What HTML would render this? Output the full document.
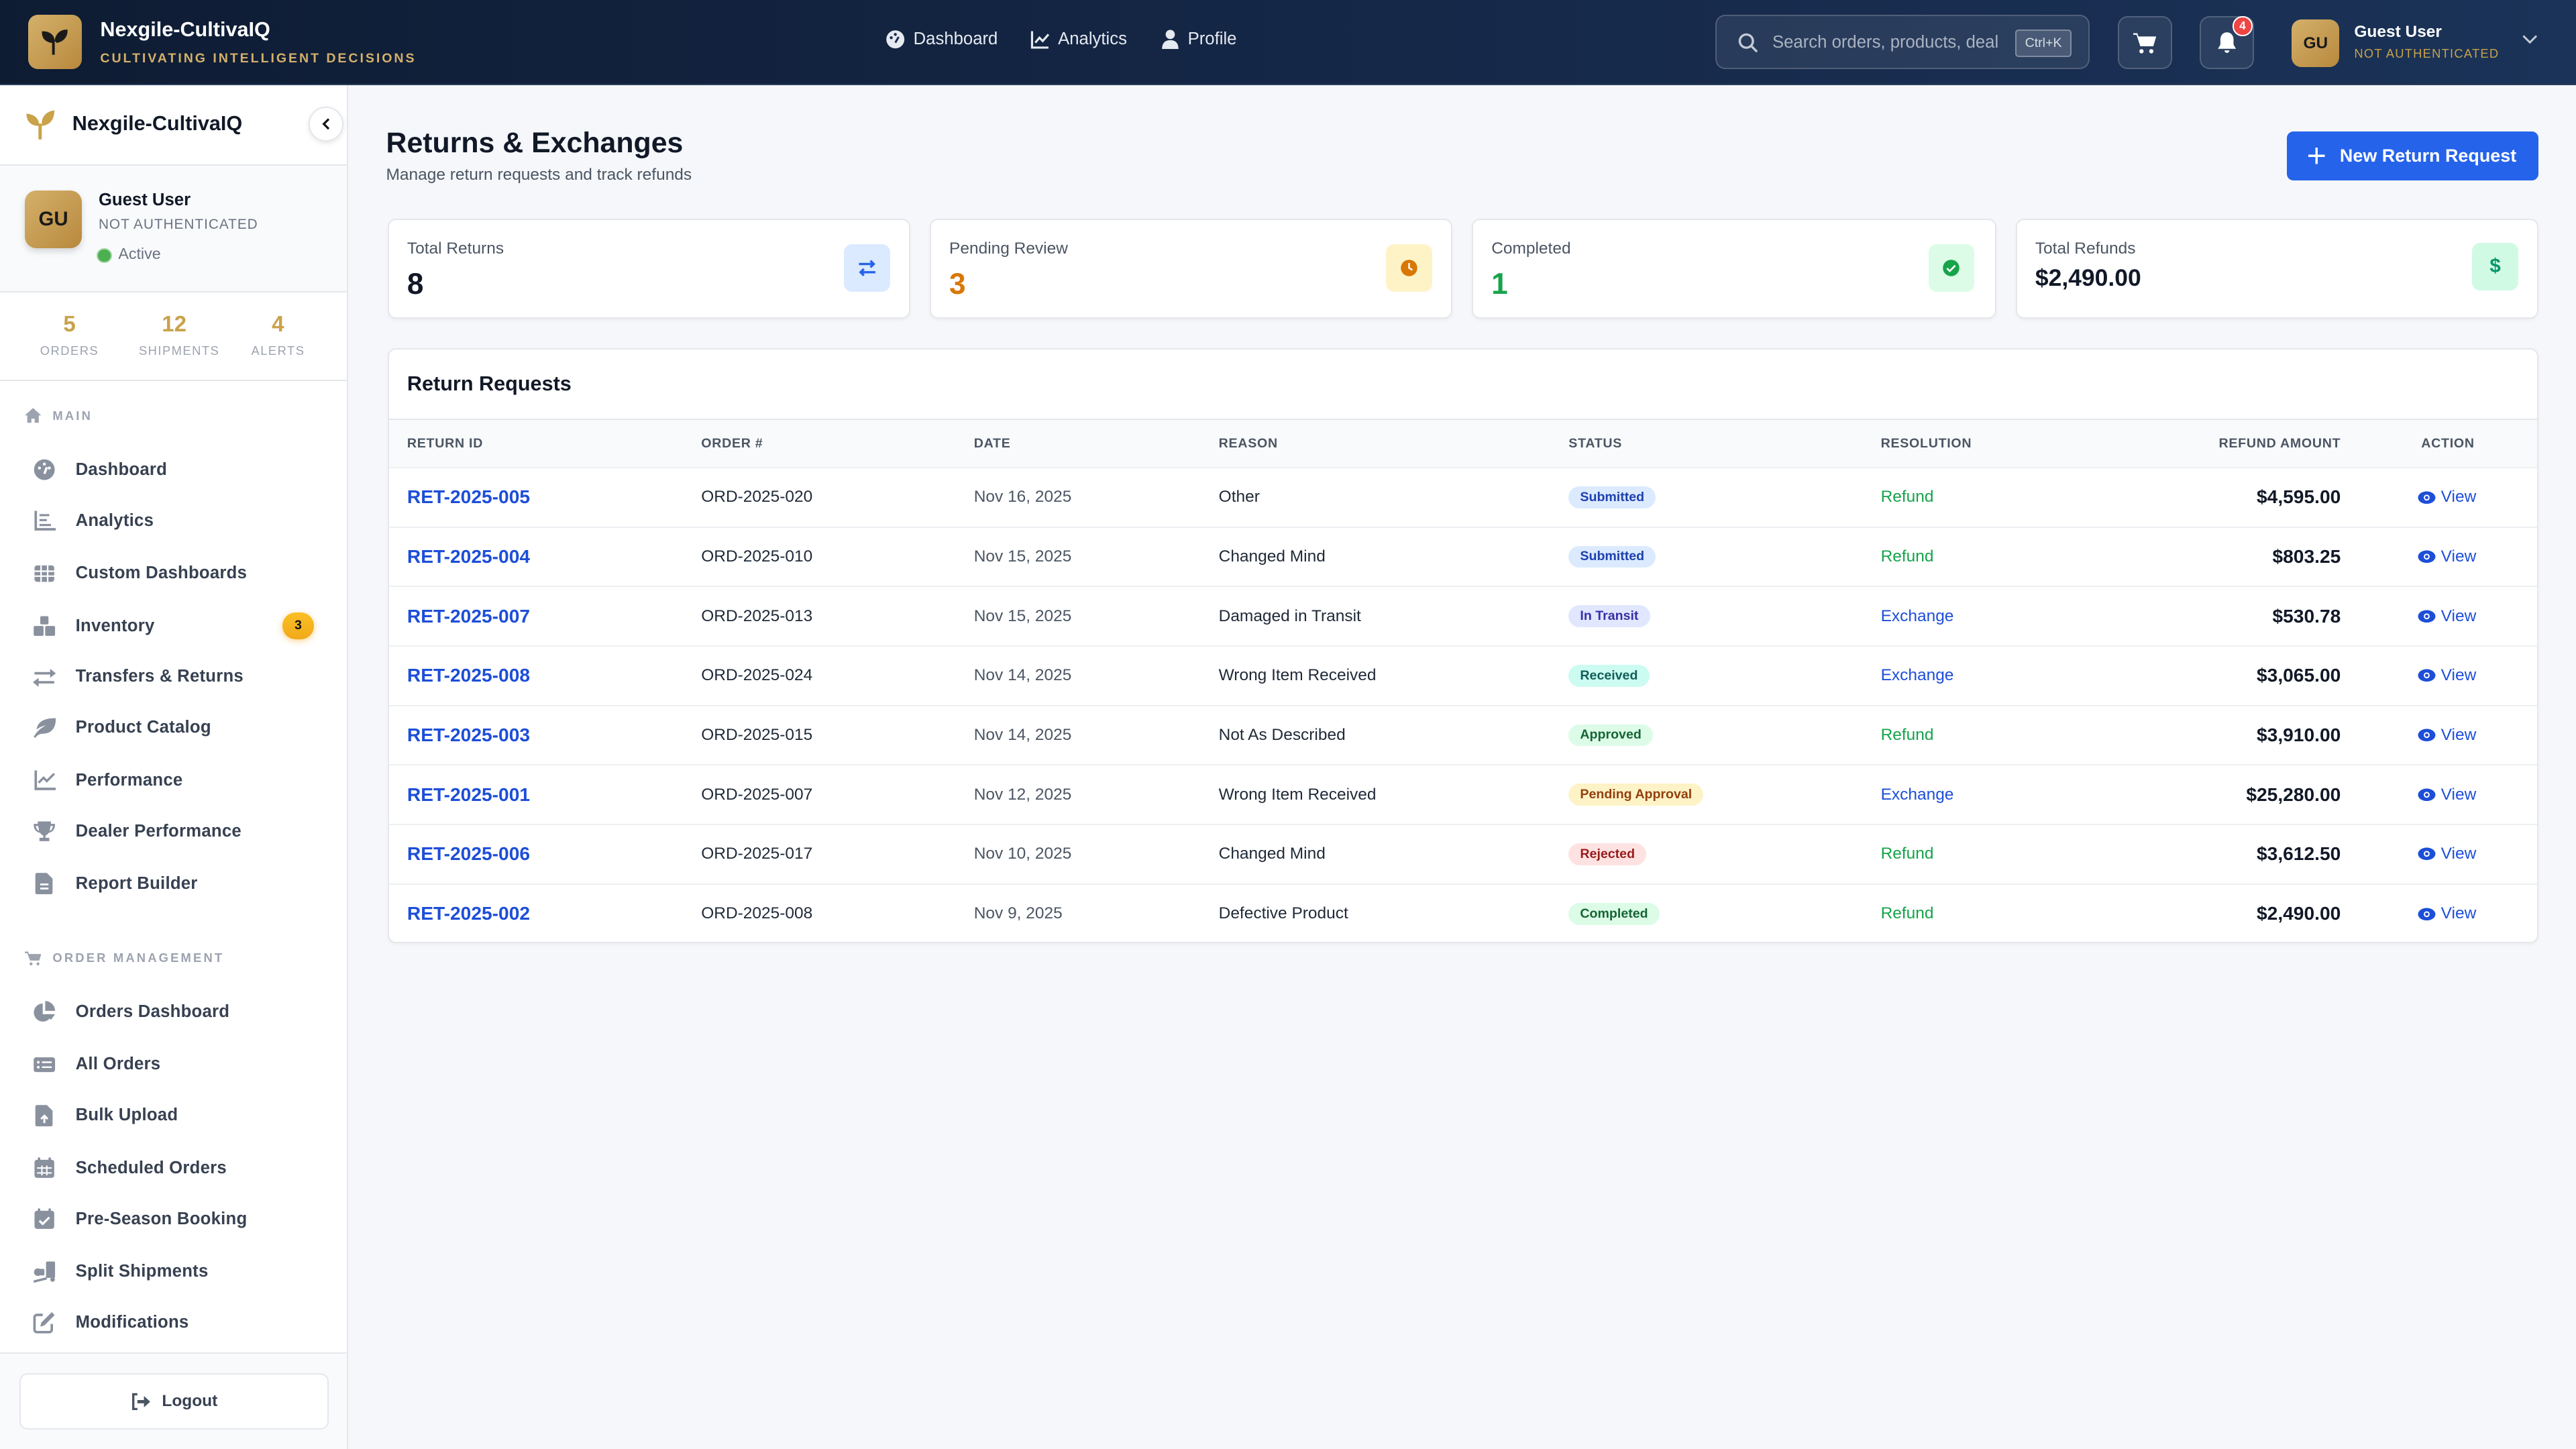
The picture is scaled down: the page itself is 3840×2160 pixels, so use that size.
<!DOCTYPE html>
<html><head><meta charset="utf-8"><style>
*{box-sizing:border-box;margin:0;padding:0}
html,body{width:3840px;height:2160px;overflow:hidden}
body{font-family:"Liberation Sans",sans-serif;background:#f5f7fa}
#r{zoom:2.44898;width:1568px;height:882px;position:relative;overflow:hidden;background:#f5f7fa}
.a{position:absolute}
.hdr{left:0;top:0;width:1568px;height:52px;background:linear-gradient(90deg,#0e1c33,#16294a 60%,#1b3358);border-bottom:1px solid #2a3d5c}
.wt{color:#fff}
.nav{font-size:10.5px;color:#e5e9f0;display:flex;align-items:center;gap:5px}
.side{left:0;top:52px;width:212px;height:830px;background:#fff;border-right:1px solid #e5e7eb}
.it{left:20px;font-size:10.5px;color:#374151;display:flex;align-items:center;font-weight:600;letter-spacing:.1px}
.it svg{width:14px;height:14px;margin-right:12px;fill:#8a919e}
.sec{left:15px;font-size:7.5px;letter-spacing:1.3px;color:#9ca3af;font-weight:700;display:flex;align-items:center}
.sec svg{width:10px;height:10px;fill:#9ca3af;margin-right:7px}
.card{background:#fff;border:1px solid #e5e7eb;border-radius:5px;box-shadow:0 1px 2px rgba(0,0,0,.04)}
.lbl{font-size:10px;color:#4b5563}
.val{font-size:18px;font-weight:700}
.ib{width:28px;height:29px;border-radius:5px;display:flex;align-items:center;justify-content:center}
table{border-collapse:collapse;width:100%}
th{font-size:8px;font-weight:700;color:#4b5563;text-align:left;height:29px;letter-spacing:.3px;background:#f9fafb}
td{font-size:10px;color:#1f2937;height:36.2px;border-top:1px solid #eef0f3}
.id{color:#1d4ed8;font-weight:700;font-size:11.5px}
.dt{color:#4b5563}
.bd{display:inline-block;font-size:8px;padding:2px 7px;border-radius:8px;font-weight:600}
.rf{color:#16a34a;font-weight:500}
.ex{color:#1d4ed8;font-weight:500}
.am{text-align:right;font-weight:700;font-size:11.5px;color:#111827;padding-right:0}
.vw{color:#1d4ed8;font-size:10px;display:flex;align-items:center;gap:3px;padding-left:47px}
</style></head><body><div id="r">
<div class="a hdr">
 <div class="a" style="left:17px;top:9px;width:33px;height:33px;border-radius:6px;background:linear-gradient(135deg,#d4b06a,#b8893e);display:flex;align-items:center;justify-content:center">
  <svg width="16" height="18" viewBox="0 0 16 18"><path d="M7.2 17V9C7.2 5 4 3.5 1 3.5 1 7 3.5 9 7.2 9M8.8 9c0-4 3-6.5 6.2-6.5 0 3.5-2.5 6-6.2 6.5" fill="#1a1a1a" stroke="#1a1a1a" stroke-width="1.6"/></svg></div>
 <div class="a wt" style="left:61px;top:11px;font-size:12.5px;font-weight:700">Nexgile-CultivaIQ</div>
 <div class="a" style="left:61px;top:31px;font-size:8px;letter-spacing:1.2px;color:#d4b06a;font-weight:600">CULTIVATING INTELLIGENT DECISIONS</div>
 <div class="a nav" style="left:539px;top:18px"><svg width="12" height="12" viewBox="0 0 12 12"><circle cx="6" cy="6" r="5.5" fill="#e5e9f0"/><circle cx="3.5" cy="5" r=".9" fill="#16294a"/><circle cx="6" cy="3" r=".9" fill="#16294a"/><path d="M6 8L8 4.5" stroke="#16294a" stroke-width="1.2"/></svg>Dashboard</div>
 <div class="a nav" style="left:627px;top:18px"><svg width="12" height="12" viewBox="0 0 12 12" fill="none" stroke="#e5e9f0" stroke-width="1.3"><path d="M1 1v10h10M3 8l2.5-3 2 2L11 3"/></svg>Analytics</div>
 <div class="a nav" style="left:707px;top:18px"><svg width="11" height="12" viewBox="0 0 11 12" fill="#e5e9f0"><circle cx="5.5" cy="3" r="2.8"/><path d="M0.5 12c0-4 2-5.5 5-5.5s5 1.5 5 5.5z"/></svg>Profile</div>
 <div class="a" style="left:1044px;top:9px;width:228px;height:33px;border-radius:6px;background:rgba(255,255,255,.08);border:1px solid rgba(255,255,255,.18)">
  <svg class="a" style="left:13px;top:10px" width="12" height="12" viewBox="0 0 12 12" fill="none" stroke="#c3cad6" stroke-width="1.4"><circle cx="5" cy="5" r="4"/><path d="M8 8l3.5 3.5"/></svg>
  <div class="a" style="left:34px;top:10px;font-size:10.5px;color:#aab3c2;white-space:nowrap">Search orders, products, deal</div>
  <div class="a" style="left:182px;top:8px;width:34px;height:17px;border:1px solid rgba(255,255,255,.3);background:rgba(255,255,255,.15);border-radius:2px;font-size:8px;color:#d7dce5;text-align:center;line-height:15px">Ctrl+K</div>
 </div>
 <div class="a" style="left:1289px;top:10px;width:33px;height:32px;border-radius:6px;background:rgba(255,255,255,.08);border:1px solid rgba(255,255,255,.18);display:flex;align-items:center;justify-content:center"><svg width="14" height="14" viewBox="0 0 14 14" fill="#fff"><path d="M0 1h2.5l.6 2H14l-1.8 6H4.3L2 2H0z"/><circle cx="5" cy="12" r="1.3"/><circle cx="11" cy="12" r="1.3"/></svg></div>
 <div class="a" style="left:1339px;top:10px;width:33px;height:32px;border-radius:6px;background:rgba(255,255,255,.08);border:1px solid rgba(255,255,255,.18);display:flex;align-items:center;justify-content:center"><svg width="12" height="14" viewBox="0 0 12 14" fill="#fff"><path d="M6 0.5c-2.6 0-4 2-4 4.5v3L.5 10.5h11L10 8V5c0-2.5-1.4-4.5-4-4.5zM4.5 11.5h3a1.5 1.5 0 01-3 0z"/></svg></div>
 <div class="a" style="left:1359px;top:10px;width:12px;height:12px;border-radius:6px;background:#ef4444;border:1px solid #fff;color:#fff;font-size:7px;text-align:center;line-height:10px;font-weight:700">4</div>
 <div class="a" style="left:1395px;top:12px;width:29px;height:29px;border-radius:6px;background:linear-gradient(135deg,#d4b06a,#b8893e);font-size:10px;font-weight:700;color:#1a1a1a;text-align:center;line-height:29px">GU</div>
 <div class="a wt" style="left:1433px;top:14px;font-size:10px;font-weight:600">Guest User</div>
 <div class="a" style="left:1433px;top:28px;font-size:7.5px;color:#c9a24a;letter-spacing:.5px">NOT AUTHENTICATED</div>
 <svg class="a" style="left:1535px;top:21px" width="10" height="7" viewBox="0 0 10 7" fill="none" stroke="#c3cad6" stroke-width="1.2"><path d="M1 1l4 4 4-4"/></svg>
</div>

<div class="a side">
 <svg class="a" style="left:15px;top:14px" width="20" height="19" viewBox="0 0 20 19" fill="#c9a24a"><path d="M8.7 18.5V10C8.7 6 6 3.5 1 3 1 8 4 10.5 8.7 10.5z"/><path d="M10.3 10.5C15 10 18 7 18 1 13.5 1.5 10.3 4.5 10.3 9z"/><rect x="8.3" y="9" width="2" height="10" rx="1"/></svg>
 <div class="a" style="left:44px;top:16px;font-size:12.5px;font-weight:700;color:#111827">Nexgile-CultivaIQ</div>
 <div class="a" style="left:188px;top:13px;width:21px;height:21px;border-radius:11px;background:#fff;border:1px solid #e5e7eb;box-shadow:0 1px 3px rgba(0,0,0,.1);display:flex;align-items:center;justify-content:center"><svg width="6" height="8" viewBox="0 0 6 8" fill="none" stroke="#111" stroke-width="1.3"><path d="M4.5 1L1.5 4l3 3"/></svg></div>
 <div class="a" style="left:0;top:48px;width:211px;height:78px;background:#f8fafc;border-top:1px solid #e5e7eb;border-bottom:1px solid #e5e7eb"></div>
 <div class="a" style="left:15px;top:64px;width:35px;height:35px;border-radius:7px;background:linear-gradient(135deg,#d4b06a,#b8893e);box-shadow:0 2px 4px rgba(0,0,0,.15);font-size:12px;font-weight:700;color:#1a1a1a;text-align:center;line-height:35px">GU</div>
 <div class="a" style="left:60px;top:64px;font-size:10.5px;font-weight:700;color:#111827">Guest User</div>
 <div class="a" style="left:60px;top:80px;font-size:8.5px;color:#6b7280;letter-spacing:.4px">NOT AUTHENTICATED</div>
 <div class="a" style="left:59px;top:99px;width:9px;height:9px;border-radius:5px;background:#4caf50;border:1px solid #a5d6a7"></div>
 <div class="a" style="left:72px;top:97px;font-size:9.5px;color:#6b7280">Active</div>
 <div class="a" style="left:0;top:138px;width:211px;display:flex;font-weight:700;color:#c9a24a;font-size:13.5px"><div style="width:85px;text-align:center">5</div><div style="width:43px;text-align:center">12</div><div style="width:84px;text-align:center">4</div></div>
 <div class="a" style="left:0;top:157px;width:211px;display:flex;color:#9ca3af;font-size:7.5px;letter-spacing:.6px"><div style="width:85px;text-align:center">ORDERS</div><div style="width:43px;text-align:center">SHIPMENTS</div><div style="width:84px;text-align:center">ALERTS</div></div>
 <div class="a" style="left:0;top:179px;width:211px;border-top:1px solid #e5e7eb"></div>

 <div class="a sec" style="top:196px"><svg viewBox="0 0 10 10"><path d="M5 0.5L0 5h1.5v4.5h2.5V7h2v2.5h2.5V5H10z"/></svg>MAIN</div>
 <div class="a it" style="top:227px"><svg viewBox="0 0 14 14"><circle cx="7" cy="7" r="6.3"/><circle cx="4" cy="6" r=".9" fill="#fff"/><circle cx="7" cy="3.6" r=".9" fill="#fff"/><circle cx="10" cy="6" r=".9" fill="#fff"/><path d="M7 9.5l1.5-4" stroke="#fff" stroke-width="1.4"/></svg>Dashboard</div>
 <div class="a it" style="top:258px"><svg viewBox="0 0 14 14"><path d="M1 1h1.5v10.5H14V13H1z"/><rect x="4" y="3" width="6" height="1.3"/><rect x="4" y="6" width="4.5" height="1.3"/><rect x="4" y="9" width="7" height="1.3"/></svg>Analytics</div>
 <div class="a it" style="top:290px"><svg viewBox="0 0 14 14"><rect x="1" y="2" width="12" height="10" rx="1.5"/><path d="M1 5.5h12M1 8.5h12M5 2v10M9 2v10" stroke="#fff" stroke-width="0.9"/></svg>Custom Dashboards</div>
 <div class="a it" style="top:322px"><svg viewBox="0 0 14 14"><rect x="4.5" y="1" width="5" height="5" rx=".8"/><rect x="0.5" y="7" width="6" height="6" rx=".8"/><rect x="7.5" y="7" width="6" height="6" rx=".8"/></svg>Inventory</div>
 <div class="a" style="left:172px;top:321px;width:19px;height:16px;border-radius:8px;background:linear-gradient(#fbbf24,#f0a91a);box-shadow:0 1px 4px rgba(245,158,11,.45);font-size:8px;font-weight:700;text-align:center;line-height:16px;color:#111">3</div>
 <div class="a it" style="top:353px"><svg viewBox="0 0 14 14"><path d="M1 4h9.5V2L14 4.8 10.5 7.5V5.5H1zM13 9.5H3.5v-2L0 10.2 3.5 13v-2H13z"/></svg>Transfers &amp; Returns</div>
 <div class="a it" style="top:384px"><svg viewBox="0 0 14 14"><path d="M14 1C7 1 3 3 2.2 8 4 6.5 6 5.8 8 5.5 6 6.5 3 8 .5 12.5l1 .5C2.5 11.5 4 10.5 6 10.5c5 0 8-3 8-9.5z"/></svg>Product Catalog</div>
 <div class="a it" style="top:416px"><svg viewBox="0 0 14 14"><path d="M1 1h1.5v10.5H14V13H1z"/><path d="M3.5 8.5l3-3 2 2L13 3" fill="none" stroke="#8a919e" stroke-width="1.4"/></svg>Performance</div>
 <div class="a it" style="top:447px"><svg viewBox="0 0 14 14"><path d="M3 1h8v1.5h2.5C13.5 6 12 7.5 9.5 8 9 9 8 9.5 7.7 9.5V11H10v2H4v-2h2.3V9.5C6 9.5 5 9 4.5 8 2 7.5.5 6 .5 2.5H3zM1.8 3.8c.3 1.8 1 2.6 2 3L3.2 3.8zM12.2 3.8h-1.4l-.6 3c1-.4 1.700-1.2 2-3z"/></svg>Dealer Performance</div>
 <div class="a it" style="top:479px"><svg viewBox="0 0 14 14"><path d="M2.5 0.5h6l3.5 3.5v8.5a1 1 0 01-1 1h-8.5a1 1 0 01-1-1v-11a1 1 0 011-1z"/><path d="M4.5 7.5h5M4.5 10h5" stroke="#fff" stroke-width="1.1"/></svg>Report Builder</div>

 <div class="a sec" style="top:526px"><svg viewBox="0 0 10 10"><path d="M0 1h2l.5 1.5H10L8.8 6.5H3.2L1.5 2H0z"/><circle cx="3.8" cy="8.5" r=".9"/><circle cx="8" cy="8.5" r=".9"/></svg>ORDER MANAGEMENT</div>
 <div class="a it" style="top:557px"><svg viewBox="0 0 14 14"><path d="M6 2a5.5 5.5 0 105.5 6.5H6z"/><path d="M7.5 0.5v6h6a6 6 0 00-6-6z"/><path d="M8 8.5h5.5L11 12z"/></svg>Orders Dashboard</div>
 <div class="a it" style="top:589px"><svg viewBox="0 0 14 14"><rect x="0.5" y="2.5" width="13" height="9" rx="1.5"/><circle cx="3.3" cy="5.5" r=".8" fill="#fff"/><circle cx="3.3" cy="8.5" r=".8" fill="#fff"/><path d="M5.5 5.5h6M5.5 8.5h6" stroke="#fff" stroke-width="1"/></svg>All Orders</div>
 <div class="a it" style="top:620px"><svg viewBox="0 0 14 14"><path d="M2.5 0.5h6l3.5 3.5v8.5a1 1 0 01-1 1h-8.5a1 1 0 01-1-1v-11a1 1 0 011-1z"/><path d="M7 11.5V7.5M5 9l2-2 2 2" fill="none" stroke="#fff" stroke-width="1.2"/></svg>Bulk Upload</div>
 <div class="a it" style="top:652px"><svg viewBox="0 0 14 14"><rect x="1" y="2" width="12" height="11" rx="1.5"/><rect x="3" y="0.5" width="1.5" height="3" rx=".7"/><rect x="9.5" y="0.5" width="1.5" height="3" rx=".7"/><path d="M2.5 7h9M2.5 10h9M5.5 5.5v6M8.5 5.5v6" stroke="#fff" stroke-width=".8"/></svg>Scheduled Orders</div>
 <div class="a it" style="top:683px"><svg viewBox="0 0 14 14"><rect x="1" y="2" width="12" height="11" rx="1.5"/><rect x="3" y="0.5" width="1.5" height="3" rx=".7"/><rect x="9.5" y="0.5" width="1.5" height="3" rx=".7"/><path d="M4 8l2 2 4-4" fill="none" stroke="#fff" stroke-width="1.3"/></svg>Pre-Season Booking</div>
 <div class="a it" style="top:715px"><svg viewBox="0 0 14 14"><rect x="8" y="1" width="5.5" height="10" rx=".8"/><circle cx="12" cy="12" r="1.4"/><path d="M0.5 12.5l8-2v1.5l-8 2z"/><circle cx="3" cy="7.5" r="2.3"/><rect x="3" y="5.5" width="4" height="4" rx=".6"/></svg>Split Shipments</div>
 <div class="a it" style="top:746px"><svg viewBox="0 0 14 14"><path d="M6 2.5H2.5a1.5 1.5 0 00-1.5 1.5v7.5A1.5 1.5 0 002.5 13h7.5a1.5 1.5 0 001.5-1.5V8" fill="none" stroke="#8a919e" stroke-width="1.5"/><path d="M11.5 0.8l1.8 1.8-6.3 6.3-2.5.7.7-2.5z"/></svg>Modifications</div>

 <div class="a" style="left:0;top:771px;width:211px;height:59px;background:#f8fafc;border-top:1px solid #e5e7eb"></div>
 <div class="a" style="left:12px;top:784px;width:188px;height:34px;border-radius:5px;background:#fff;border:1px solid #e5e7eb;display:flex;align-items:center;justify-content:center;font-size:10px;color:#374151;font-weight:600;gap:7px"><svg width="12" height="11" viewBox="0 0 12 11" fill="#4b5563"><path d="M4 1H1.5v9H4" fill="none" stroke="#4b5563" stroke-width="1.4"/><path d="M4 4.5h4V2l3.8 3.5L8 9V6.5H4z"/></svg>Logout</div>
</div>

<div class="a" style="left:235px;top:77px;font-size:17.5px;font-weight:700;color:#111827">Returns &amp; Exchanges</div>
<div class="a" style="left:235px;top:101px;font-size:10px;color:#4b5563">Manage return requests and track refunds</div>
<div class="a" style="left:1392px;top:80px;width:153px;height:30px;border-radius:4px;background:#2563eb;color:#fff;font-size:11px;font-weight:600;display:flex;align-items:center;justify-content:center;gap:9px"><svg width="10" height="10" viewBox="0 0 10 10" stroke="#fff" stroke-width="1.4"><path d="M5 0v10M0 5h10"/></svg>New Return Request</div>

<div class="a card" style="left:236px;top:133px;width:318px;height:61px"><div class="a lbl" style="left:11px;top:12px">Total Returns</div><div class="a val" style="left:11px;top:29px;color:#111827">8</div><div class="a ib" style="left:277px;top:15px;background:#dbeafe"><svg width="12" height="12" viewBox="0 0 12 12" fill="none" stroke="#2563eb" stroke-width="1.4"><path d="M1 3.5h9M8 1.5l2 2-2 2M11 8.5H2M4 6.5l-2 2 2 2"/></svg></div></div>
<div class="a card" style="left:566px;top:133px;width:318px;height:61px"><div class="a lbl" style="left:11px;top:12px">Pending Review</div><div class="a val" style="left:11px;top:29px;color:#d97706">3</div><div class="a ib" style="left:277px;top:15px;background:#fef3c7"><svg width="11" height="11" viewBox="0 0 11 11"><circle cx="5.5" cy="5.5" r="5" fill="#d97706"/><path d="M5.5 2.5v3l2 1.2" stroke="#fff" stroke-width="1" fill="none"/></svg></div></div>
<div class="a card" style="left:896px;top:133px;width:319px;height:61px"><div class="a lbl" style="left:11px;top:12px">Completed</div><div class="a val" style="left:11px;top:29px;color:#16a34a">1</div><div class="a ib" style="left:277px;top:15px;background:#dcfce7"><svg width="11" height="11" viewBox="0 0 11 11"><circle cx="5.5" cy="5.5" r="5" fill="#16a34a"/><path d="M3 5.7l1.7 1.7 3.3-3.4" stroke="#fff" stroke-width="1.1" fill="none"/></svg></div></div>
<div class="a card" style="left:1227px;top:133px;width:318px;height:61px"><div class="a lbl" style="left:11px;top:12px">Total Refunds</div><div class="a" style="left:11px;top:27px;font-size:14.5px;font-weight:700;color:#111827">$2,490.00</div><div class="a ib" style="left:277px;top:14px;background:#d1fae5;color:#059669;font-weight:700;font-size:12px">$</div></div>

<div class="a card" style="left:236px;top:212px;width:1309px;height:362px;overflow:hidden">
 <div class="a" style="left:11px;top:14px;font-size:12.5px;font-weight:700;color:#111827">Return Requests</div>
 <div class="a" style="left:0;top:42px;width:100%;border-top:1px solid #e5e7eb">
 <table>
 <colgroup><col style="width:190px"><col style="width:166px"><col style="width:149px"><col style="width:213px"><col style="width:190px"><col style="width:140px"><col style="width:140px"><col></colgroup>
 <tr><th style="padding-left:11px">RETURN ID</th><th>ORDER #</th><th>DATE</th><th>REASON</th><th>STATUS</th><th>RESOLUTION</th><th style="text-align:right">REFUND AMOUNT</th><th style="padding-left:49px">ACTION</th></tr>
 <tr><td class="id" style="padding-left:11px">RET-2025-005</td><td>ORD-2025-020</td><td class="dt">Nov 16, 2025</td><td>Other</td><td><span class="bd" style="background:#dbeafe;color:#1e40af">Submitted</span></td><td class="rf">Refund</td><td class="am">$4,595.00</td><td><div class="vw"><svg width="11" height="8" viewBox="0 0 11 8"><ellipse cx="5.5" cy="4" rx="5.3" ry="3.8" fill="#1d4ed8"/><circle cx="5.5" cy="4" r="1.8" fill="#fff"/><circle cx="5.5" cy="4" r="1" fill="#1d4ed8"/></svg>View</div></td></tr>
 <tr><td class="id" style="padding-left:11px">RET-2025-004</td><td>ORD-2025-010</td><td class="dt">Nov 15, 2025</td><td>Changed Mind</td><td><span class="bd" style="background:#dbeafe;color:#1e40af">Submitted</span></td><td class="rf">Refund</td><td class="am">$803.25</td><td><div class="vw"><svg width="11" height="8" viewBox="0 0 11 8"><ellipse cx="5.5" cy="4" rx="5.3" ry="3.8" fill="#1d4ed8"/><circle cx="5.5" cy="4" r="1.8" fill="#fff"/><circle cx="5.5" cy="4" r="1" fill="#1d4ed8"/></svg>View</div></td></tr>
 <tr><td class="id" style="padding-left:11px">RET-2025-007</td><td>ORD-2025-013</td><td class="dt">Nov 15, 2025</td><td>Damaged in Transit</td><td><span class="bd" style="background:#e0e7ff;color:#3730a3">In Transit</span></td><td class="ex">Exchange</td><td class="am">$530.78</td><td><div class="vw"><svg width="11" height="8" viewBox="0 0 11 8"><ellipse cx="5.5" cy="4" rx="5.3" ry="3.8" fill="#1d4ed8"/><circle cx="5.5" cy="4" r="1.8" fill="#fff"/><circle cx="5.5" cy="4" r="1" fill="#1d4ed8"/></svg>View</div></td></tr>
 <tr><td class="id" style="padding-left:11px">RET-2025-008</td><td>ORD-2025-024</td><td class="dt">Nov 14, 2025</td><td>Wrong Item Received</td><td><span class="bd" style="background:#ccfbf1;color:#115e59">Received</span></td><td class="ex">Exchange</td><td class="am">$3,065.00</td><td><div class="vw"><svg width="11" height="8" viewBox="0 0 11 8"><ellipse cx="5.5" cy="4" rx="5.3" ry="3.8" fill="#1d4ed8"/><circle cx="5.5" cy="4" r="1.8" fill="#fff"/><circle cx="5.5" cy="4" r="1" fill="#1d4ed8"/></svg>View</div></td></tr>
 <tr><td class="id" style="padding-left:11px">RET-2025-003</td><td>ORD-2025-015</td><td class="dt">Nov 14, 2025</td><td>Not As Described</td><td><span class="bd" style="background:#dcfce7;color:#166534">Approved</span></td><td class="rf">Refund</td><td class="am">$3,910.00</td><td><div class="vw"><svg width="11" height="8" viewBox="0 0 11 8"><ellipse cx="5.5" cy="4" rx="5.3" ry="3.8" fill="#1d4ed8"/><circle cx="5.5" cy="4" r="1.8" fill="#fff"/><circle cx="5.5" cy="4" r="1" fill="#1d4ed8"/></svg>View</div></td></tr>
 <tr><td class="id" style="padding-left:11px">RET-2025-001</td><td>ORD-2025-007</td><td class="dt">Nov 12, 2025</td><td>Wrong Item Received</td><td><span class="bd" style="background:#fef3c7;color:#92400e">Pending Approval</span></td><td class="ex">Exchange</td><td class="am">$25,280.00</td><td><div class="vw"><svg width="11" height="8" viewBox="0 0 11 8"><ellipse cx="5.5" cy="4" rx="5.3" ry="3.8" fill="#1d4ed8"/><circle cx="5.5" cy="4" r="1.8" fill="#fff"/><circle cx="5.5" cy="4" r="1" fill="#1d4ed8"/></svg>View</div></td></tr>
 <tr><td class="id" style="padding-left:11px">RET-2025-006</td><td>ORD-2025-017</td><td class="dt">Nov 10, 2025</td><td>Changed Mind</td><td><span class="bd" style="background:#fee2e2;color:#991b1b">Rejected</span></td><td class="rf">Refund</td><td class="am">$3,612.50</td><td><div class="vw"><svg width="11" height="8" viewBox="0 0 11 8"><ellipse cx="5.5" cy="4" rx="5.3" ry="3.8" fill="#1d4ed8"/><circle cx="5.5" cy="4" r="1.8" fill="#fff"/><circle cx="5.5" cy="4" r="1" fill="#1d4ed8"/></svg>View</div></td></tr>
 <tr><td class="id" style="padding-left:11px">RET-2025-002</td><td>ORD-2025-008</td><td class="dt">Nov 9, 2025</td><td>Defective Product</td><td><span class="bd" style="background:#dcfce7;color:#166534">Completed</span></td><td class="rf">Refund</td><td class="am">$2,490.00</td><td><div class="vw"><svg width="11" height="8" viewBox="0 0 11 8"><ellipse cx="5.5" cy="4" rx="5.3" ry="3.8" fill="#1d4ed8"/><circle cx="5.5" cy="4" r="1.8" fill="#fff"/><circle cx="5.5" cy="4" r="1" fill="#1d4ed8"/></svg>View</div></td></tr>
 </table></div>
</div>
</div></body></html>
